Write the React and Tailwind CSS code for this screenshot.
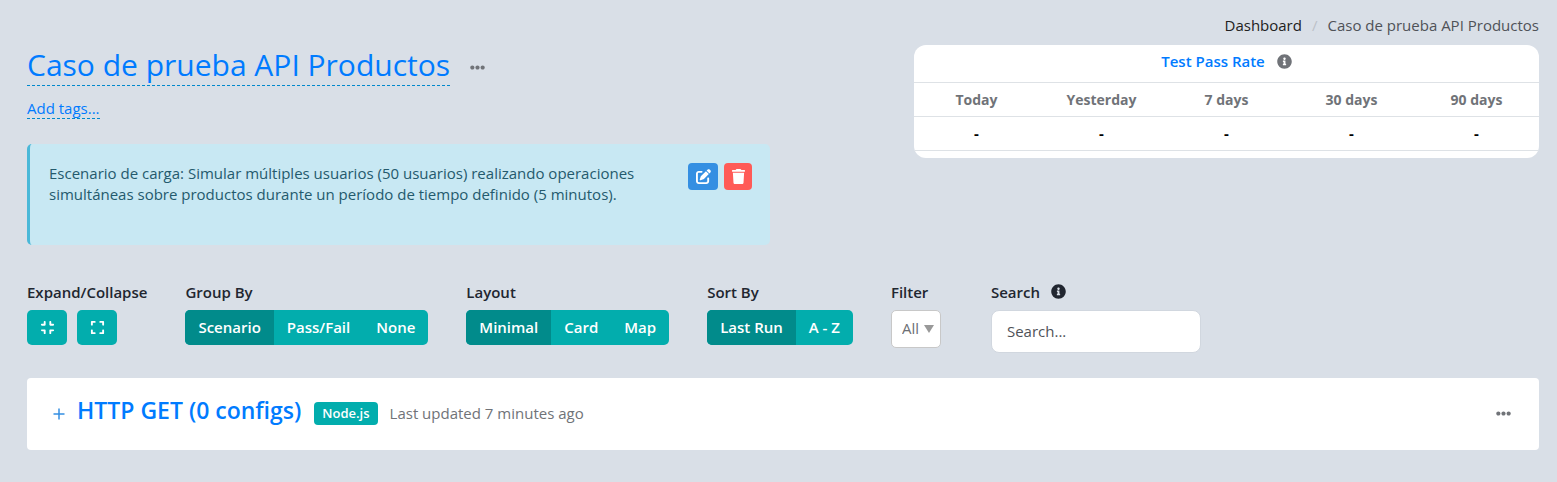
import { FaEllipsisH, FaInfoCircle } from "react-icons/fa";
import { FaPenToSquare, FaTrash, FaCompress, FaExpand } from "react-icons/fa6";

const periods = ["Today", "Yesterday", "7 days", "30 days", "90 days"];

function ButtonGroup({ label, options }) {
  return (
    <div role="group" aria-label={label}>
      <div className="mb-2 leading-5 font-semibold text-[#212630]">{label}</div>
      <div className="flex overflow-hidden rounded-[5px] bg-[#02adad]">
        {options.map((option, i) => (
          <button
            key={option}
            type="button"
            aria-pressed={i === 0}
            className="h-[35px] px-[13px] font-semibold text-white aria-pressed:bg-[#018b8b]"
          >
            {option}
          </button>
        ))}
      </div>
    </div>
  );
}

function IconButton({ label, children }) {
  return (
    <button
      type="button"
      aria-label={label}
      className="flex h-[35px] w-10 items-center justify-center rounded-[5px] bg-[#02adad] text-[15px] text-white"
    >
      {children}
    </button>
  );
}

function PassRate() {
  return (
    <section className="overflow-hidden rounded-xl bg-white pb-[7px]">
      <h2 className="flex h-[37px] items-center justify-center gap-3 pb-1 text-[15px] font-semibold text-[#007bff]">
        Test Pass Rate
        <FaInfoCircle className="text-[15px] text-[#707378]" />
      </h2>
      <table className="w-full table-fixed border-collapse text-center">
        <thead>
          <tr className="h-[34px] border-y border-[#dee2e6] text-[14px] text-[#707378]">
            {periods.map((period) => (
              <th key={period} scope="col" className="font-bold">
                {period}
              </th>
            ))}
          </tr>
        </thead>
        <tbody>
          <tr className="h-[34px] border-b border-[#dee2e6] font-bold text-black">
            {periods.map((period) => (
              <td key={period}>-</td>
            ))}
          </tr>
        </tbody>
      </table>
    </section>
  );
}

export default function App() {
  return (
    <main className="min-h-screen bg-[#d9dfe7] pt-[15px] pr-[18px] pb-8 pl-[27px] font-['Open_Sans',sans-serif] text-[15px]">
      <nav aria-label="Breadcrumb" className="flex justify-end gap-[10px] leading-5">
        <a href="#dashboard" className="text-[#212121]">
          Dashboard
        </a>
        <span className="text-[#bcc1c7]">/</span>
        <span className="text-[#4f5258]">Caso de prueba API Productos</span>
      </nav>

      <header className="mt-[10px] flex items-start justify-between">
        <div className="w-1/2 pr-[13px]">
          <div className="flex items-center gap-5">
            <h1>
              <a
                href="#rename"
                className="block border-b border-dashed border-[#0088cc] text-[30px] leading-10 text-[#007bff]"
              >
                Caso de prueba API Productos
              </a>
            </h1>
            <button type="button" aria-label="Scenario actions" className="pt-1 text-[15px] text-[#707378]">
              <FaEllipsisH />
            </button>
          </div>
          <a
            href="#tags"
            className="mt-3 inline-block border-b border-dashed border-[#0088cc] leading-5 text-[#007bff]"
          >
            Add tags...
          </a>
          <div className="mt-6 flex min-h-[101px] items-start justify-between rounded-[5px] border-l-[3px] border-[#4ab8d8] bg-[#c8e8f3] py-[19px] pr-[18px] pl-[19px] text-[#245a6d]">
            <p className="max-w-[600px] leading-[21px]">
              Escenario de carga: Simular múltiples usuarios (50 usuarios) realizando operaciones simultáneas sobre
              productos durante un período de tiempo definido (5 minutos).
            </p>
            <div className="flex gap-[6px] text-[15px] text-white">
              <button
                type="button"
                aria-label="Edit description"
                className="flex h-[27px] w-[30px] items-center justify-center rounded-[4px] bg-[#348fe2]"
              >
                <FaPenToSquare />
              </button>
              <button
                type="button"
                aria-label="Delete description"
                className="flex h-[27px] w-7 items-center justify-center rounded-[4px] bg-[#ff5b57]"
              >
                <FaTrash />
              </button>
            </div>
          </div>
        </div>
        <div className="w-5/12 pl-[5px]">
          <PassRate />
        </div>
      </header>

      <div className="mt-[37px] flex flex-wrap items-start gap-x-[38px] gap-y-4">
        <div role="group" aria-label="Expand/Collapse">
          <div className="mb-2 leading-5 font-semibold text-[#212630]">Expand/Collapse</div>
          <div className="flex gap-[10px]">
            <IconButton label="Collapse all">
              <FaCompress />
            </IconButton>
            <IconButton label="Expand all">
              <FaExpand />
            </IconButton>
          </div>
        </div>
        <ButtonGroup label="Group By" options={["Scenario", "Pass/Fail", "None"]} />
        <ButtonGroup label="Layout" options={["Minimal", "Card", "Map"]} />
        <ButtonGroup label="Sort By" options={["Last Run", "A - Z"]} />
        <div>
          <label htmlFor="filter" className="mb-2 block leading-5 font-semibold text-[#212630]">
            Filter
          </label>
          <div className="relative">
            <select
              id="filter"
              className="h-[38px] w-[50px] appearance-none rounded-[5px] border border-[#c8c8c8] bg-white pl-[10px] text-[#6c6f74]"
            >
              <option>All</option>
            </select>
            <svg
              viewBox="0 0 10 8"
              className="pointer-events-none absolute top-[15px] right-[7px] h-2 w-[10px] fill-[#999999]"
              aria-hidden="true"
            >
              <path d="M0 0h10L5 8z" />
            </svg>
          </div>
        </div>
        <div className="ml-3">
          <div className="mb-2 flex items-center gap-[11px] leading-5 text-[#212630]">
            <label htmlFor="search" className="font-semibold">
              Search
            </label>
            <FaInfoCircle />
          </div>
          <input
            id="search"
            type="search"
            placeholder="Search..."
            className="h-[43px] w-[210px] rounded-lg border border-[#d1d7df] bg-white px-[15px] text-[#4f5258] placeholder:text-[#4f5258]"
          />
        </div>
      </div>

      <section className="mt-[25px] flex h-[72px] items-center rounded bg-white pr-7 pl-[26px]">
        <button type="button" aria-label="Expand HTTP GET" className="mr-3 text-[#348fe2]">
          <svg viewBox="0 0 12 12" className="h-3 w-3" fill="none" stroke="currentColor" strokeWidth="1.5" aria-hidden="true">
            <path d="M6 .5v11M.5 6h11" />
          </svg>
        </button>
        <h2 className="mr-[13px] pb-2 text-[23px] leading-8 font-semibold">
          <a href="#http-get" className="text-[#007bff]">
            HTTP GET (0 configs)
          </a>
        </h2>
        <span className="mr-3 rounded-[4px] bg-[#02adad] px-2 text-[13px] leading-[23px] font-semibold text-white">
          Node.js
        </span>
        <span className="text-[#707378]">Last updated 7 minutes ago</span>
        <button type="button" aria-label="More actions" className="ml-auto text-[15px] text-[#707378]">
          <FaEllipsisH />
        </button>
      </section>
    </main>
  );
}
